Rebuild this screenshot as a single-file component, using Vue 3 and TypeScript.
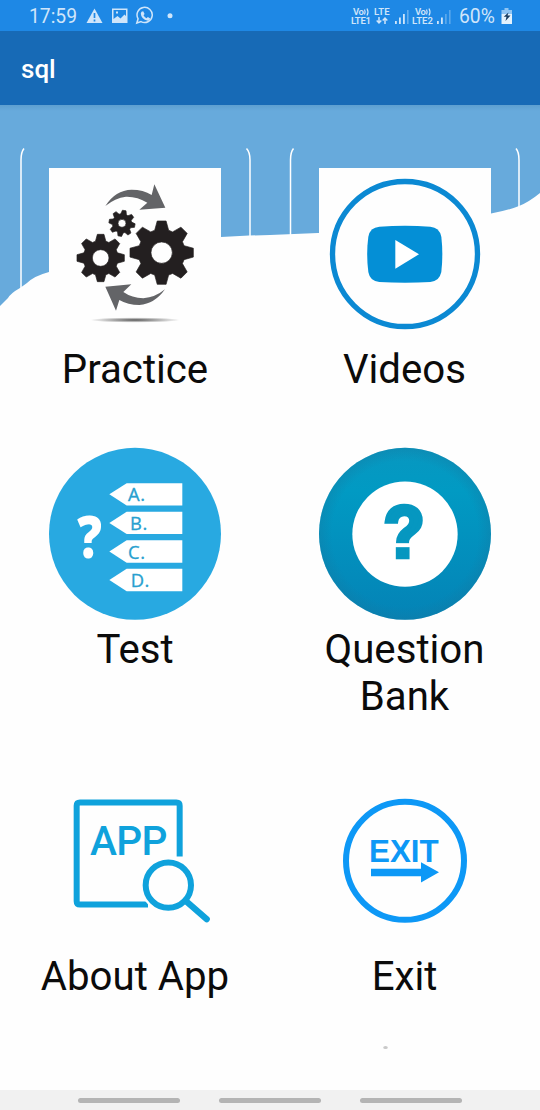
<script setup lang="ts">
interface Gear {
  x: number
  y: number
  r: number
  hole: number
  turn: number
}

interface Tile {
  id: string
  label: string
}

const tiles: Tile[] = [
  { id: 'practice', label: 'Practice' },
  { id: 'videos', label: 'Videos' },
  { id: 'test', label: 'Test' },
  { id: 'bank', label: 'Question Bank' },
  { id: 'about', label: 'About App' },
  { id: 'exit', label: 'Exit' },
]

const gears: Gear[] = [
  { x: 485, y: 458, r: 95, hole: 32, turn: 0 },
  { x: 302, y: 474, r: 71, hole: 25, turn: 0 },
  { x: 366, y: 370, r: 39, hole: 12, turn: 10 },
]

const answers: string[] = ['A.', 'B.', 'C.', 'D.']
const answerX: number[] = [264, 270, 264, 272]

// Eight-toothed wheel with a round hole, centred on the gear's position.
function gearPath(g: Gear): string {
  const body = g.r * 0.73
  const pts: string[] = []
  for (let i = 0; i < 8; i++) {
    const a = ((i * 45 + g.turn) * Math.PI) / 180
    const corners: [number, number][] = [
      [body * 0.97, -g.r * 0.22],
      [g.r, -g.r * 0.14],
      [g.r, g.r * 0.14],
      [body * 0.97, g.r * 0.22],
    ]
    for (const [u, v] of corners) {
      const x = g.x + u * Math.cos(a) - v * Math.sin(a)
      const y = g.y + u * Math.sin(a) + v * Math.cos(a)
      pts.push(`${x.toFixed(1)} ${y.toFixed(1)}`)
    }
  }
  const h = g.hole
  return `M${pts.join('L')}ZM${g.x - h} ${g.y}a${h} ${h} 0 1 0 ${2 * h} 0a${h} ${h} 0 1 0 ${-2 * h} 0Z`
}
</script>

<template>
  <div class="screen">
    <div class="status">
      <span class="clock">17:59</span>
      <svg class="notices" width="92" height="20" viewBox="0 0 92 20">
        <path d="M8.500 2.500L16.500 17H.5Z" fill="currentColor" />
        <path d="M8.500 7v5M8.500 13.500v2" stroke="#1e88e5" stroke-width="1.700" />
        <path fill-rule="evenodd" fill="currentColor" d="M26 2.500h15.500v14.500H26ZM27.500 4v9l4-3 3 2.500 4-4 1.500 1.500V4ZM30 5.500h2v2h-2Z" />
        <path d="M50.800 17l1.300-4.200a7.600 7.600 0 1 1 2.900 2.800Z" fill="none" stroke="currentColor" stroke-width="1.500" />
        <path d="M55.500 5.800l1.700-.5 1.400 2.600-1.100 1.300q1 2 3 3l1.400-1.100 2.300 1.500q-.4 2-2.400 2.200-6.700-1.500-7-7.200Z" fill="currentColor" />
        <circle cx="84" cy="9.700" r="2.500" fill="currentColor" />
      </svg>
      <svg class="signals" width="104" height="20" viewBox="0 0 104 20">
        <g fill="currentColor" font-family="Roboto, sans-serif" font-weight="600">
          <text x="3" y="9" font-size="9.500" textLength="11">Vo</text>
          <text x="1" y="18" font-size="9.500" textLength="20">LTE1</text>
          <text x="24" y="9" font-size="9.500" textLength="15.500">LTE</text>
          <text x="65" y="9" font-size="9.500" textLength="11">Vo</text>
          <text x="62" y="18" font-size="9.500" textLength="21">LTE2</text>
        </g>
        <g fill="none" stroke="currentColor" stroke-width="1.200">
          <path d="M14.500 3.500q1.300 2.500 0 5M17 2.500q2 3.500 0 7M76.500 3.500q1.300 2.500 0 5M79 2.500q2 3.500 0 7" />
          <path d="M29 11v6M26.700 14.500L29 17l2.300-2.500M35 18v-6M32.700 14.500L35 12l2.300 2.500" stroke-width="1.500" />
        </g>
        <g fill="currentColor">
          <path d="M45 15h1.800v3H45ZM49 11.500h1.800V18H49ZM53 8h1.800v10H53Z" />
          <path d="M57 4h1.600v14H57Z" opacity=".4" />
          <path d="M87 15h1.800v3H87ZM91 11.500h1.800V18H91Z" />
          <path d="M95 8h1.700v10H95ZM99 4h1.600v14H99Z" opacity=".35" />
        </g>
      </svg>
      <span class="percent">60%</span>
      <svg class="battery" width="12" height="18" viewBox="0 0 12 18">
        <path d="M3.500 1h4v2H11v4H.5V3h3Z" fill="#8fc5f4" />
        <path d="M.5 7H11v10H.5Z" fill="#e3f2fd" />
        <path d="M7.500 5.500L2.700 9.700H5.500L4.500 14 9.500 8.500H6.500Z" fill="#173a5e" />
      </svg>
    </div>

    <header class="appbar">sql</header>

    <main class="content">
      <svg class="backdrop" width="540" height="985" viewBox="0 105 540 985">
        <defs>
          <linearGradient id="barShade" x1="0" y1="0" x2="0" y2="1">
            <stop offset="0" stop-color="#5d9fd0" />
            <stop offset="1" stop-color="#67aadc" />
          </linearGradient>
        </defs>
        <path d="M0 105H540V193Q529 202 519 206Q506 211 491 213.500C440 226 380 231 318 233L270 235L249 235.500L221 237C160 240 95 255 49 272Q34 276 27 283L20 288Q11 293 8 298L0 306Z" fill="#67aadc" />
        <path d="M0 105H540V111H0Z" fill="url(#barShade)" />
        <path d="M24 148.500Q21 152 21 160V289M246.500 148.500Q250 152 250 160V237M293.500 148.500Q290.500 152 290.500 160V236M516 148.500Q519 152 519 160V207" fill="none" stroke="#fff" stroke-width="1.500" />
        <ellipse cx="385.500" cy="1047.500" rx="2.300" ry="1.500" fill="#c9c9c9" />
      </svg>

      <div class="grid">
        <section v-for="tile in tiles" :key="tile.id" class="tile">
          <svg v-if="tile.id === 'practice'" class="icon" viewBox="0 0 172 172">
            <defs>
              <radialGradient id="shadow">
                <stop offset="0" stop-color="#555" />
                <stop offset=".4" stop-color="#999" />
                <stop offset="1" stop-color="#fefefe" />
              </radialGradient>
            </defs>
            <rect width="172" height="172" fill="#fefefe" />
            <g transform="translate(-49 -68) scale(.33333)">
              <path v-for="g in gears" :key="g.x" :d="gearPath(g)" fill="#231f20" fill-rule="evenodd" stroke="#231f20" stroke-width="2" stroke-linejoin="round" />
              <g fill="#636467">
                <path d="M316 318Q346 270 395 269Q430 269 455 285L463 253L496 323L418 329L442 308Q412 289 378 290Q345 294 316 318Z" />
                <path d="M316 560L394 553L370 576Q396 594 430 595Q466 592 495 568Q464 612 418 615Q384 615 358 600L348 632Z" />
              </g>
              <ellipse cx="405" cy="660" rx="135" ry="8" fill="url(#shadow)" />
            </g>
          </svg>

          <svg v-else-if="tile.id === 'videos'" class="icon" viewBox="0 0 172 172">
            <rect width="172" height="172" fill="#fefefe" />
            <g transform="translate(-49 -68) scale(.33333)">
              <circle cx="405" cy="462" r="217.500" fill="none" stroke="#0b89d3" stroke-width="16" />
              <path d="M328 380Q405 375 481 380Q508 382 514 410Q520 463 514 516Q508 544 481 546Q405 550 328 546Q300 544 295 516Q288 463 295 410Q300 382 328 380Z" fill="#048fd6" />
              <path d="M376 420L447 463L376 506Z" fill="#fff" />
            </g>
          </svg>

          <svg v-else-if="tile.id === 'test'" class="icon" viewBox="0 0 172 172">
            <g transform="translate(-9 -17.500) scale(.33333)">
              <circle cx="285" cy="310" r="258" fill="#28a9e1" />
              <text class="quiz-mark" x="112" y="382" textLength="74" lengthAdjust="spacingAndGlyphs">?</text>
              <g v-for="(a, i) in answers" :key="a" :transform="`translate(0 ${i * 85.700})`">
                <path d="M208 191.500L260 158H427V225H260Z" fill="#fff" />
                <text class="answer" :x="answerX[i]" y="213">{{ a }}</text>
              </g>
            </g>
          </svg>

          <svg v-else-if="tile.id === 'bank'" class="icon" viewBox="0 0 172 172">
            <defs>
              <linearGradient id="disc" x1="0" y1="0" x2="0" y2="1">
                <stop offset="0" stop-color="#0897c0" />
                <stop offset=".25" stop-color="#019ac3" />
                <stop offset="1" stop-color="#0483b6" />
              </linearGradient>
              <radialGradient id="rim">
                <stop offset=".85" stop-color="#1678a0" stop-opacity="0" />
                <stop offset="1" stop-color="#1678a0" stop-opacity=".35" />
              </radialGradient>
            </defs>
            <g transform="translate(-9 -17.500) scale(.33333)">
              <circle cx="285" cy="310" r="258" fill="url(#disc)" />
              <circle cx="285" cy="310" r="258" fill="url(#rim)" />
              <circle cx="285" cy="311" r="158" fill="#fff" />
              <text class="bank-mark" x="221" y="379" textLength="122" lengthAdjust="spacingAndGlyphs">?</text>
              <path d="M255 338H315V350H255Z" fill="#fff" />
            </g>
          </svg>

          <svg v-else-if="tile.id === 'about'" class="icon" viewBox="0 0 172 172">
            <g transform="translate(-9 5.500) scale(.33333)" fill="none" stroke="#0fa2dc">
              <path d="M419 228V76Q419 66 409 66H120Q110 66 110 76V362Q110 372 120 372H324" stroke-width="18" />
              <circle cx="385" cy="314" r="84" fill="#fefefe" stroke="none" />
              <circle cx="385" cy="314" r="68" stroke-width="18" />
              <path d="M438 362L500 416" stroke-width="19" stroke-linecap="round" />
              <text class="app-text" x="150" y="225" textLength="232" lengthAdjust="spacing">APP</text>
            </g>
          </svg>

          <svg v-else class="icon" viewBox="0 0 172 172">
            <g transform="translate(-9 5.500) scale(.33333)" fill="#0d98f6">
              <circle cx="285" cy="241" r="177" fill="none" stroke="#0d98f6" stroke-width="18" />
              <text class="exit-text" x="177" y="244" textLength="209" lengthAdjust="spacingAndGlyphs">EXIT</text>
              <path d="M183 265H333V245L387 275.500L333 306V287H183Z" />
            </g>
          </svg>

          <div class="label">{{ tile.label }}</div>
        </section>
      </div>
    </main>

    <nav class="navbar">
      <i></i>
      <i></i>
      <i></i>
    </nav>
  </div>
</template>

<style>
body {
  margin: 0;
}
</style>

<style scoped>
.screen {
  display: flex;
  flex-direction: column;
  width: 540px;
  height: 1110px;
  overflow: hidden;
  background: #fefefe;
  font-family: Roboto, 'Liberation Sans', sans-serif;
}

.status {
  display: flex;
  align-items: center;
  box-sizing: border-box;
  height: 31px;
  padding: 0 27px 0 29px;
  background: #1e88e5;
  color: #cfe5fa;
  font-size: 19.3px;
  line-height: 31px;
}

.clock {
  width: 57px;
  padding-top: 2px;
}

.signals {
  margin-left: auto;
}

.percent {
  width: 37px;
  margin: 2px 5px 0 5px;
}

.appbar {
  box-sizing: border-box;
  height: 74px;
  padding-left: 21px;
  background: #176ab6;
  color: #fff;
  font-size: 26px;
  font-weight: 500;
  line-height: 77px;
}

.content {
  position: relative;
  height: 985px;
}

.backdrop {
  position: absolute;
  inset: 0;
}

.grid {
  position: relative;
  display: grid;
  grid-template-columns: 228px 229px;
  column-gap: 41px;
  row-gap: 55px;
  padding: 63px 0 0 21px;
}

.tile {
  display: flex;
  flex-direction: column;
  align-items: center;
}

.icon {
  display: block;
  width: 172px;
  height: 172px;
  overflow: visible;
}

.label {
  width: 200px;
  margin-top: 6px;
  color: #0b0b0b;
  font-size: 40.2px;
  line-height: 47px;
  text-align: center;
}

.quiz-mark {
  fill: #fff;
  font: 800 174px 'Open Sans', sans-serif;
}

.answer {
  fill: #28a0cf;
  stroke: #28a0cf;
  stroke-width: 1px;
  font: 400 55px 'Open Sans', sans-serif;
  letter-spacing: 2px;
}

.bank-mark {
  fill: #0697c0;
  stroke: #0697c0;
  stroke-width: 14px;
  font: 700 216px 'Liberation Sans', sans-serif;
}

.app-text {
  fill: #0fa2dc;
  stroke: none;
  font: 500 122px Roboto, sans-serif;
}

.exit-text {
  font: 700 95px 'Liberation Sans', sans-serif;
}

.navbar {
  display: flex;
  justify-content: center;
  gap: 39px;
  height: 20px;
  background: #f1f1f1;
}

.navbar i {
  width: 102px;
  height: 5px;
  margin-top: 8px;
  border-radius: 3px;
  background: #b4b4b4;
}
</style>
